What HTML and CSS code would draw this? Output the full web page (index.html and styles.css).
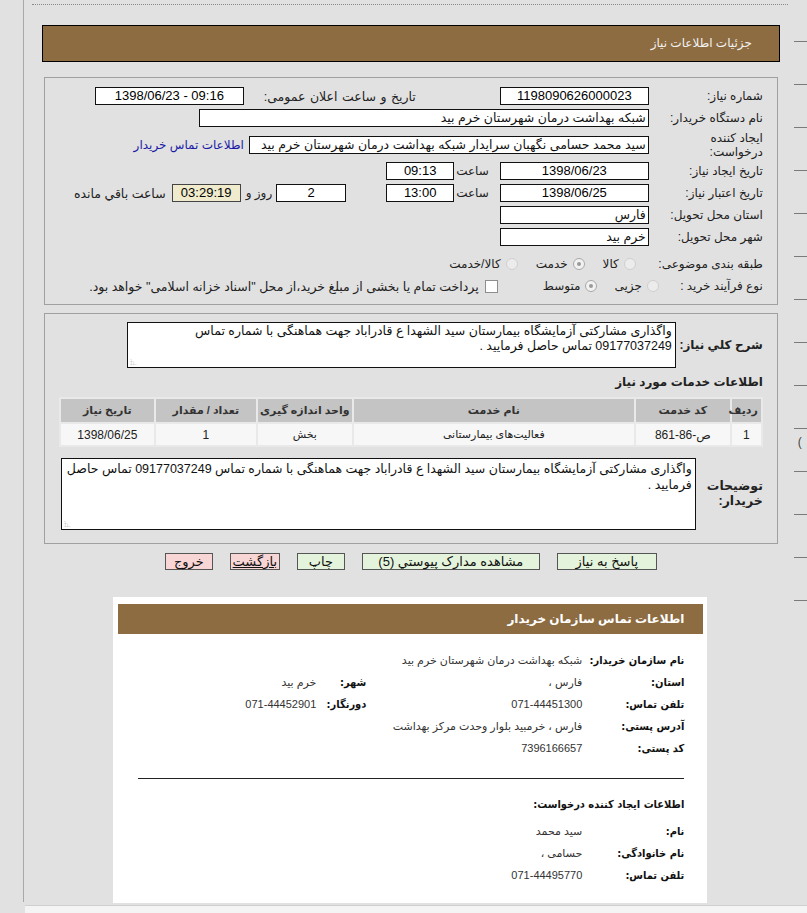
FILE: index.html
```html
<!DOCTYPE html>
<html lang="fa">
<head>
<meta charset="utf-8">
<title>جزئیات اطلاعات نیاز</title>
<link rel="stylesheet" href="styles.css">
</head>
<body>
<div class="frame">
  <div class="gutter"></div>
  <main class="page" dir="rtl">
    <div class="dots"></div>
    <div class="title-bar">جزئیات اطلاعات نیاز</div>

    <section class="box box-info">
      <div class="row">
        <div class="lbl">شماره نیاز:</div>
        <div class="field w149 center" dir="ltr">1198090626000023</div>
        <span class="pub">تاریخ و ساعت اعلان عمومی:</span>
        <div class="field w149 center" dir="ltr">1398/06/23 - 09:16</div>
      </div>
      <div class="row">
        <div class="lbl">نام دستگاه خریدار:</div>
        <div class="field fa w450">شبکه بهداشت درمان شهرستان خرم بید</div>
      </div>
      <div class="row row-tall">
        <div class="lbl">ایجاد کننده<br>درخواست:</div>
        <div class="field fa w400">سید محمد حسامی نگهبان سرایدار شبکه بهداشت درمان شهرستان خرم بید</div>
        <a class="link" href="#">اطلاعات تماس خریدار</a>
      </div>
      <div class="row">
        <div class="lbl">تاریخ ایجاد نیاز:</div>
        <div class="field w149 center" dir="ltr">1398/06/23</div>
        <span class="saat">ساعت</span>
        <div class="field w68 center" dir="ltr">09:13</div>
      </div>
      <div class="row">
        <div class="lbl">تاریخ اعتبار نیاز:</div>
        <div class="field w149 center" dir="ltr">1398/06/25</div>
        <span class="saat">ساعت</span>
        <div class="field w68 center" dir="ltr">13:00</div>
        <div class="field w70 center days">2</div>
        <span class="ruz">روز و</span>
        <div class="field w69 center remain" dir="ltr">03:29:19</div>
        <span class="remain-lbl">ساعت باقي مانده</span>
      </div>
      <div class="row">
        <div class="lbl">استان محل تحویل:</div>
        <div class="field fa w149">فارس</div>
      </div>
      <div class="row">
        <div class="lbl">شهر محل تحویل:</div>
        <div class="field fa w149">خرم بید</div>
      </div>
      <div class="row row-gap">
        <div class="lbl">طبقه بندی موضوعی:</div>
        <div class="opts opts-cat">
          <span class="opt"><span class="radio"></span>کالا</span>
          <span class="opt"><span class="radio on"></span>خدمت</span>
          <span class="opt"><span class="radio"></span>کالا/خدمت</span>
        </div>
      </div>
      <div class="row">
        <div class="lbl">نوع فرآیند خرید :</div>
        <div class="opts opts-proc">
          <span class="opt"><span class="radio"></span>جزیی</span>
          <span class="opt"><span class="radio on"></span>متوسط</span>
          <span class="opt opt-check"><span class="check"></span>پرداخت تمام یا بخشی از مبلغ خرید،از محل "اسناد خزانه اسلامی" خواهد بود.</span>
        </div>
      </div>
    </section>

    <section class="box box-desc">
      <div class="desc-row">
        <div class="blbl">شرح کلي نیاز:</div>
        <div class="ta ta-short">واگذاری مشارکتی آزمایشگاه بیمارستان سید الشهدا ع قادراباد جهت هماهنگی با شماره تماس<br>09177037249 تماس حاصل فرمایید .<span class="grip"></span></div>
      </div>
      <h3 class="sub">اطلاعات خدمات مورد نیاز</h3>
      <table class="grid">
        <thead>
          <tr>
            <th class="c1">ردیف</th>
            <th class="c2">کد خدمت</th>
            <th class="c3">نام خدمت</th>
            <th class="c4">واحد اندازه گیری</th>
            <th class="c5">تعداد / مقدار</th>
            <th class="c6">تاریخ نیاز</th>
          </tr>
        </thead>
        <tbody>
          <tr>
            <td>1</td>
            <td>ص-86-861</td>
            <td class="small">فعالیت‌های بیمارستانی</td>
            <td class="small">بخش</td>
            <td>1</td>
            <td>1398/06/25</td>
          </tr>
        </tbody>
      </table>
      <div class="desc-row desc-row2">
        <div class="blbl blbl2">توضیحات<br>خریدار:</div>
        <div class="ta ta-long">واگذاری مشارکتی آزمایشگاه بیمارستان سید الشهدا ع قادراباد جهت هماهنگی با شماره تماس 09177037249 تماس حاصل<br>فرمایید .<span class="grip"></span></div>
      </div>
    </section>

    <div class="buttons">
      <a class="btn green b-reply" href="#">پاسخ به نیاز</a>
      <a class="btn green b-docs" href="#">مشاهده مدارک پیوستي (5)</a>
      <a class="btn green b-print" href="#">چاپ</a>
      <a class="btn pink b-back" href="#">بازگشت</a>
      <a class="btn pink b-exit" href="#">خروج</a>
    </div>

    <section class="card">
      <div class="card-head">اطلاعات تماس سازمان خریدار</div>
      <div class="card-body">
        <div class="kv">
          <div class="k">نام سازمان خریدار:</div>
          <div class="v">شبکه بهداشت درمان شهرستان خرم بید</div>
        </div>
        <div class="kv">
          <div class="k">استان:</div>
          <div class="v">فارس ،</div>
          <div class="k2">شهر:</div>
          <div class="v">خرم بید</div>
        </div>
        <div class="kv">
          <div class="k">تلفن تماس:</div>
          <div class="v">071-44451300</div>
          <div class="k2">دورنگار:</div>
          <div class="v">071-44452901</div>
        </div>
        <div class="kv">
          <div class="k">آدرس پستی:</div>
          <div class="v">فارس ، خرمبید بلوار وحدت مرکز بهداشت</div>
        </div>
        <div class="kv">
          <div class="k">کد پستی:</div>
          <div class="v">7396166657</div>
        </div>
        <hr class="sep">
        <div class="creator">اطلاعات ایجاد کننده درخواست:</div>
        <div class="kv kv-first">
          <div class="k">نام:</div>
          <div class="v">سید محمد</div>
        </div>
        <div class="kv">
          <div class="k">نام خانوادگی:</div>
          <div class="v">حسامی ،</div>
        </div>
        <div class="kv">
          <div class="k">تلفن تماس:</div>
          <div class="v">071-44495770</div>
        </div>
      </div>
    </section>
  </main>
  <div class="rail">
    <span class="dash"></span><span class="dash"></span><span class="dash"></span><span class="dash"></span>
    <span class="dash"></span><span class="dash"></span><span class="dash"></span><span class="dash"></span>
    <span class="dash"></span><span class="dash dash-paren"></span><span class="dash"></span><span class="dash"></span>
    <span class="dash"></span><span class="dash"></span>
  </div>
</div>
<div class="footer-strip"></div>
</body>
</html>
```

FILE: styles.css
```css
* { box-sizing: border-box; }

html, body {
  margin: 0;
  padding: 0;
  overflow: hidden;
}

body {
  width: 807px;
  height: 913px;
  background: #e1e1e1;
  color: #000;
  font-family: "Liberation Sans", "DejaVu Sans", sans-serif;
  font-size: 12px;
}

.frame {
  display: flex;
  height: 905px;
}

.gutter {
  width: 25px;
  height: 902px;
  border-right: 1px solid #a8a8a8;
}

.page {
  flex: 1;
  padding-top: 4px;
}

.rail {
  width: 17px;
  padding-top: 41px;
  display: flex;
  flex-direction: column;
  gap: 42px;
}

.dash {
  display: block;
  height: 1px;
  margin-left: 3px;
  background: #7a7a7a;
  position: relative;
}

.dash-paren::after {
  content: "(";
  position: absolute;
  left: 4px;
  top: 7px;
  font-size: 12px;
  color: #444;
}

.footer-strip {
  margin-left: 25px;
  height: 8px;
  border-top: 1px solid #cfcfcf;
  background: #f4f4f4;
}

.dots {
  margin: 0 3px 0 8px;
  border-top: 1px dotted #8a8a8a;
}

.title-bar {
  margin: 20px 11px 0 18px;
  height: 37px;
  background: #8d6c41;
  border: 1px solid #000;
  color: #f2f2f2;
  padding-right: 27px;
  line-height: 35px;
  font-size: 12px;
}

/* ---- boxes ---- */
.box {
  margin: 15px 13px 0 20px;
  border: 1px solid #a0a0a0;
}

.box-info {
  padding: 7px 14px 7px 8px;
}

.row {
  display: flex;
  align-items: center;
  height: 22px;
  white-space: nowrap;
}

.row-tall {
  height: 28px;
  margin: 2px 0 1px;
}

.row-gap {
  margin-top: 5px;
}

.lbl {
  width: 102px;
  margin-left: 12px;
  color: #222;
  font-size: 12px;
  line-height: 14px;
}

.field {
  height: 18px;
  border: 1px solid #111;
  background: #fff;
  font-size: 13px;
  line-height: 16px;
  padding: 0 2px;
  overflow: hidden;
  white-space: nowrap;
  text-align: right;
}

.field.fa {
  font-size: 12.5px;
  color: #111;
}

.center { text-align: center; }

.w149 { width: 149px; }
.w450 { width: 450px; }
.w400 { width: 400px; }
.w68 { width: 68px; }
.w70 { width: 70px; }
.w69 { width: 69px; }

.pub {
  width: 167px;
  margin-right: 84px;
  margin-left: 5px;
  color: #222;
  font-size: 12.5px;
  word-spacing: 1px;
}

.link {
  margin-right: 5px;
  color: #1a1aa6;
  text-decoration: none;
}

.saat {
  margin: 0 11px 0 2px;
  color: #222;
}

.days { margin-right: 40px; }

.ruz {
  margin: 0 4px 0 5px;
  color: #222;
}

.remain {
  background: #efebcc;
  border-color: #444;
}

.remain-lbl {
  margin-right: 6px;
  color: #222;
  font-size: 12.5px;
}

.opts {
  display: flex;
  align-items: center;
}

.opts-cat { margin-right: 13px; gap: 18px; }
.opts-proc { margin-right: -10px; gap: 17px; }

.opt {
  display: flex;
  align-items: center;
  gap: 5px;
  color: #222;
}

.opt-check {
  margin-right: 28px;
  gap: 6px;
  font-size: 12.5px;
}

.radio {
  width: 12px;
  height: 12px;
  border-radius: 50%;
  border: 1px solid #cfcfcf;
  background: #ececec;
  position: relative;
}

.radio.on {
  border-color: #a8a8a8;
  background: #f2f2f2;
}

.radio.on::after {
  content: "";
  position: absolute;
  left: 3px;
  top: 3px;
  width: 4px;
  height: 4px;
  border-radius: 50%;
  background: #9a9a9a;
}

.check {
  width: 13px;
  height: 13px;
  border: 1px solid #8e8e8e;
  background: #fff;
}

/* ---- description box ---- */
.box-desc {
  margin-top: 8px;
  padding: 8px 14px 13px 14px;
}

.desc-row {
  display: flex;
  align-items: center;
}

.blbl {
  font-weight: bold;
  font-size: 12px;
  width: 85px;
  margin-left: 2px;
  color: #222;
  white-space: nowrap;
}

.ta {
  position: relative;
  background: #fff;
  border: 1px solid #111;
  font-size: 12.5px;
  line-height: 15px;
  padding: 1px 3px;
  color: #111;
  white-space: nowrap;
  overflow: hidden;
}

.ta-short {
  width: 549px;
  height: 46px;
}

.desc-row2 { margin-top: 11px; }

.blbl2 {
  width: 62px;
  margin-left: 5px;
  line-height: 15px;
  font-size: 12.5px;
}

.ta-long {
  width: 635px;
  height: 72px;
  padding-top: 2px;
  line-height: 16px;
}

.grip {
  position: absolute;
  left: 2px;
  bottom: 2px;
  width: 7px;
  height: 7px;
  background-image: radial-gradient(circle, #b5b5b5 0.7px, transparent 0.9px);
  background-size: 2.5px 2.5px;
  clip-path: polygon(0 0, 0 100%, 100% 100%);
}

.sub {
  margin: 6px 0 7px;
  font-size: 12px;
  line-height: 16px;
  font-weight: bold;
  color: #222;
}

.grid {
  width: 702px;
  border-collapse: collapse;
  background: #f4f4f4;
  border: 1px solid #e9e9e9;
  table-layout: fixed;
}

.grid th {
  height: 25px;
  background: #c4c4c4;
  border: 2px solid #e9e9e9;
  font-size: 11px;
  font-weight: bold;
  color: #333;
  text-align: center;
}

.grid td {
  height: 23px;
  border: 2px solid #e9e9e9;
  text-align: center;
  font-size: 12px;
  color: #222;
  background: #f7f7f7;
}

.grid td.small { font-size: 11px; }

.grid .c1 { width: 31px; text-align: right; padding-right: 3px; }
.grid .c2 { width: 96px; }
.grid .c3 { width: 282px; }
.grid .c4 { width: 96px; }
.grid .c5 { width: 102px; }
.grid .c6 { width: 95px; }

/* ---- buttons ---- */
.buttons {
  margin: 9px 13px 0 20px;
  display: flex;
  justify-content: center;
  gap: 17px;
}

.btn {
  display: block;
  height: 17px;
  border: 1px solid #555;
  color: #111;
  text-decoration: none;
  text-align: center;
  font-size: 13px;
  line-height: 15px;
}

.green { background: #e4f4dc; }
.pink { background: #f9d6d6; }

.b-reply { width: 100px; }
.b-docs { width: 178px; }
.b-print { width: 48px; }
.b-back { width: 50px; text-decoration: underline; }
.b-exit { width: 48px; }

/* ---- contact card ---- */
.card {
  width: 594px;
  height: 306px;
  margin: 27px auto 0;
  position: relative;
  left: 3px;
  background: #fff;
  padding: 7px 4px 0 5px;
}

.card-head {
  height: 30px;
  background: #8d6c41;
  color: #fff;
  font-weight: bold;
  font-size: 12px;
  line-height: 30px;
  padding-right: 19px;
}

.card-body {
  padding: 15px 19px 0 20px;
}

.kv {
  display: grid;
  grid-template-columns: 102px 216px 50px auto;
  align-items: center;
  height: 22px;
}

.k, .k2, .creator {
  font-family: "DejaVu Sans", sans-serif;
  font-stretch: condensed;
  font-weight: bold;
  font-size: 11px;
  color: #111;
  white-space: nowrap;
}

.v {
  font-size: 11px;
  color: #333;
  white-space: nowrap;
}

.sep {
  margin: 19px 0 0;
  border: 0;
  border-top: 1px solid #222;
}

.creator {
  margin-top: 18px;
  height: 16px;
  line-height: 16px;
}

.kv-first { margin-top: 7px; }
```
